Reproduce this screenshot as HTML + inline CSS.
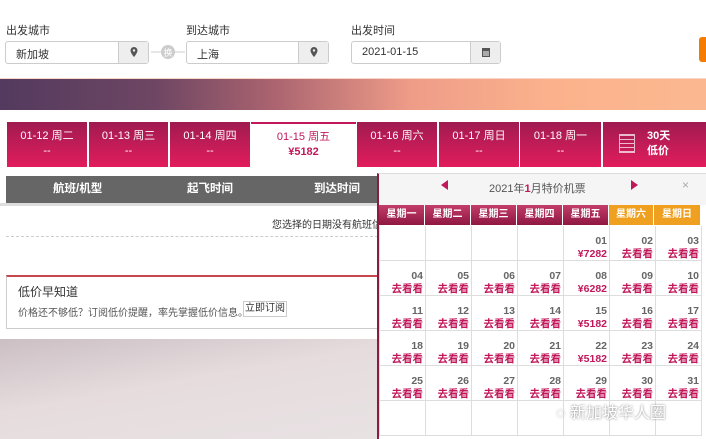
<!DOCTYPE html>
<html><head><meta charset="utf-8"><style>
*{margin:0;padding:0;box-sizing:border-box}
body{width:706px;height:439px;overflow:hidden;position:relative;background:#fff;font-family:"Liberation Sans","Noto Sans CJK SC",sans-serif;font-size:11px;color:#333}
.a{position:absolute}
.lbl{font-size:11px;color:#333}
.inp{border:1px solid #ccc;border-radius:3px;height:23px;background:#fff}
.inp span{position:absolute;left:10px;top:4px;font-size:11px}
.ic{position:absolute;right:0;top:0;width:30px;height:21px;background:#eee;border-left:1px solid #ccc}
.tab{top:122px;height:45px;background:linear-gradient(#a01b50,#e21c5d);color:#fff;text-align:center;font-size:11px;line-height:15px;padding-top:7px}
.wk{top:205px;height:20px;color:#fff;font-weight:bold;font-size:10px;text-align:center;line-height:20px;background:linear-gradient(#c43d6a,#8e1742)}
.cell{width:46px;height:35px;border-right:1px solid #ddd;border-bottom:1px solid #ddd;text-align:right;padding:9px 2px 0 0;font-size:10.5px;line-height:13px;font-weight:bold;color:#666}
.cell i{display:block;font-style:normal;color:#c0185a}
</style></head><body>
<div class="a lbl" style="left:6px;top:22px">出发城市</div>
<div class="a lbl" style="left:186px;top:22px">到达城市</div>
<div class="a lbl" style="left:351px;top:22px">出发时间</div>
<div class="a inp" style="left:5px;top:41px;width:144px"><span>新加坡</span><div class="ic"><svg width="30" height="21"><path d="M15 5a3.5 3.5 0 0 1 3.5 3.5c0 2.5-3.5 6.5-3.5 6.5s-3.5-4-3.5-6.5A3.5 3.5 0 0 1 15 5z" fill="#555"/><circle cx="15" cy="8.5" r="1.2" fill="#eee"/></svg></div></div>
<div class="a" style="left:151px;top:45px;width:34px;height:14px"><svg width="34" height="14"><line x1="0" y1="7" x2="34" y2="7" stroke="#ccc"/><circle cx="17" cy="7" r="7" fill="#ccc"/><text x="17" y="11" font-size="9" fill="#fff" text-anchor="middle">换</text></svg></div>
<div class="a inp" style="left:186px;top:41px;width:143px"><span>上海</span><div class="ic"><svg width="30" height="21"><path d="M15 5a3.5 3.5 0 0 1 3.5 3.5c0 2.5-3.5 6.5-3.5 6.5s-3.5-4-3.5-6.5A3.5 3.5 0 0 1 15 5z" fill="#555"/><circle cx="15" cy="8.5" r="1.2" fill="#eee"/></svg></div></div>
<div class="a inp" style="left:351px;top:41px;width:150px"><span>2021-01-15</span><div class="ic"><svg width="30" height="21"><rect x="11" y="6" width="8" height="9" fill="#555"/><rect x="12" y="9" width="6" height="5" fill="#aaa"/></svg></div></div>
<div class="a" style="left:699px;top:37px;width:10px;height:25px;background:#f57c00;border-radius:3px"></div>
<div class="a" style="left:0;top:78px;width:706px;height:1px;background:#f7d6c8"></div>
<div class="a" style="left:0;top:79px;width:706px;height:31px;background:linear-gradient(90deg,#533a5e 0%,#6e4663 22%,#a8626f 38%,#ee9c88 58%,#fbb28c 78%,#fbb890 100%)"></div>
<div class="a tab" style="left:7px;width:80px">01-12 周二<br>--</div>
<div class="a tab" style="left:89px;width:79px">01-13 周三<br>--</div>
<div class="a tab" style="left:170px;width:80px">01-14 周四<br>--</div>
<div class="a tab" style="left:251px;width:105px;background:#fff;color:#c0185a;border-top:2px solid #c0185a;padding-top:6px">01-15 周五<br><b>¥5182</b></div>
<div class="a tab" style="left:357px;width:80px">01-16 周六<br>--</div>
<div class="a tab" style="left:439px;width:80px">01-17 周日<br>--</div>
<div class="a tab" style="left:520px;width:81px">01-18 周一<br>--</div>
<div class="a tab" style="left:603px;width:103px;text-align:left;padding-left:44px;font-weight:bold">30天<br>低价</div>
<div class="a" style="left:619px;top:134px;width:16px;height:19px;border:1px solid #fff;opacity:.7;background:repeating-linear-gradient(#fff 0 1px,transparent 1px 4px)"></div>
<div class="a" style="left:6px;top:176px;width:372px;height:27px;background:#666;color:#fff;font-weight:bold;font-size:11.5px;line-height:27px"><span class="a" style="left:47px">航班/机型</span><span class="a" style="left:181px">起飞时间</span><span class="a" style="left:308px">到达时间</span></div>
<div class="a" style="left:0;top:203px;width:378px;height:3px;background:#ddd"></div>
<div class="a" style="left:272px;top:216px;font-size:10px;color:#333;white-space:nowrap">您选择的日期没有航班信息</div>
<div class="a" style="left:6px;top:236px;width:372px;border-top:1px dashed #ccc"></div>
<div class="a" style="left:6px;top:275px;width:372px;height:54px;border:1px solid #ccc;border-top:2px solid #c7474f"></div>
<div class="a" style="left:18px;top:283px;font-size:12px;color:#333">低价早知道</div>
<div class="a" style="left:18px;top:304px;font-size:10px;color:#555">价格还不够低？订阅低价提醒，率先掌握低价信息。</div>
<div class="a" style="left:243px;top:301px;width:44px;height:16px;border:1px solid #ccc;font-size:10px;text-align:center;line-height:14px">立即订阅</div>
<div class="a" style="left:0;top:339px;width:378px;height:100px;background:linear-gradient(170deg,#cbbfc3,#e6dcde 45%,#e8e2e3 100%)"></div>
<div class="a" style="left:377px;top:173px;width:329px;height:266px;background:#fff;border-left:2px solid #8a1c40;border-top:1px solid #ddd"></div>
<div class="a" style="left:379px;top:174px;width:327px;height:31px;background:#f5f5f5"></div>
<div class="a" style="left:441px;top:180px;width:0;height:0;border:5px solid transparent;border-right:7px solid #c0185a;border-left:0"></div>
<div class="a" style="left:631px;top:180px;width:0;height:0;border:5px solid transparent;border-left:7px solid #c0185a;border-right:0"></div>
<div class="a" style="left:489px;top:180px;font-size:11px;color:#555">2021年<b style="color:#c0185a">1</b>月特价机票</div>
<div class="a" style="left:682px;top:178px;font-size:12px;color:#aaa">×</div>
<div class="a wk" style="left:379px;width:45px">星期一</div>
<div class="a wk" style="left:425px;width:45px">星期二</div>
<div class="a wk" style="left:471px;width:45px">星期三</div>
<div class="a wk" style="left:517px;width:45px">星期四</div>
<div class="a wk" style="left:563px;width:45px">星期五</div>
<div class="a wk" style="left:609px;width:44px;background:#f0a020">星期六</div>
<div class="a wk" style="left:654px;width:46px;background:#f0a020">星期日</div>
<div class="a" style="left:379px;top:226px;width:322px;display:grid;grid-template-columns:repeat(7,46px);border-left:1px solid #ddd">
<div class="cell"></div><div class="cell"></div><div class="cell"></div><div class="cell"></div><div class="cell">01<i>¥7282</i></div><div class="cell">02<i>去看看</i></div><div class="cell">03<i>去看看</i></div>
<div class="cell">04<i>去看看</i></div><div class="cell">05<i>去看看</i></div><div class="cell">06<i>去看看</i></div><div class="cell">07<i>去看看</i></div><div class="cell">08<i>¥6282</i></div><div class="cell">09<i>去看看</i></div><div class="cell">10<i>去看看</i></div>
<div class="cell">11<i>去看看</i></div><div class="cell">12<i>去看看</i></div><div class="cell">13<i>去看看</i></div><div class="cell">14<i>去看看</i></div><div class="cell">15<i>¥5182</i></div><div class="cell">16<i>去看看</i></div><div class="cell">17<i>去看看</i></div>
<div class="cell">18<i>去看看</i></div><div class="cell">19<i>去看看</i></div><div class="cell">20<i>去看看</i></div><div class="cell">21<i>去看看</i></div><div class="cell">22<i>¥5182</i></div><div class="cell">23<i>去看看</i></div><div class="cell">24<i>去看看</i></div>
<div class="cell">25<i>去看看</i></div><div class="cell">26<i>去看看</i></div><div class="cell">27<i>去看看</i></div><div class="cell">28<i>去看看</i></div><div class="cell">29<i>去看看</i></div><div class="cell">30<i>去看看</i></div><div class="cell">31<i>去看看</i></div>
<div class="cell"></div><div class="cell"></div><div class="cell"></div><div class="cell"></div><div class="cell"></div><div class="cell"></div><div class="cell"></div>
</div>
<div class="a" style="left:556px;top:399px;font-size:16px;color:#fff;text-shadow:0 0 2px #777;white-space:nowrap">◌ 新加坡华人圈</div>
</body></html>
